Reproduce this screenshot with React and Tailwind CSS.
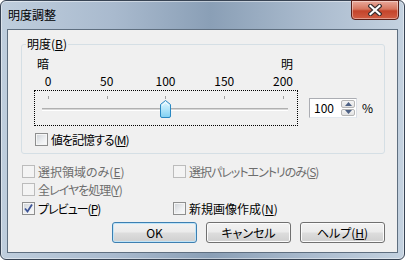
import React from "react";

function Check({ label, acc, disabled, checked, tight, className }) {
  return (
    <div className={`flex items-center gap-[3px] h-[13px] ${className || ""}`}>
      <span
        className={`w-[13px] h-[13px] shrink-0 border flex items-center justify-center ${
          disabled
            ? "border-[#bcbcbc] bg-[#f4f4f4]"
            : "border-[#8e8f8f] bg-[linear-gradient(135deg,#cdd1d6_0%,#eef0f2_60%,#fbfbfb_100%)] shadow-[inset_0_0_0_1px_#f5f5f5]"
        }`}
      >
        {checked && (
          <svg width="11" height="11" viewBox="0 0 11 11">
            <path d="M2 5.5 L4.5 8.5 L9 1.5" fill="none" stroke="#3d5496" strokeWidth="1.8" />
          </svg>
        )}
      </span>
      <span
        className={`leading-[14px] whitespace-nowrap ${tight ? "tracking-[-1px]" : ""} ${
          disabled ? "text-[#6d6d6d]" : "text-black"
        }`}
      >
        {label}(<span className="underline underline-offset-[1px]">{acc}</span>)
      </span>
    </div>
  );
}

function Button({ children, isDefault }) {
  return (
    <div
      className={`w-[85px] h-[21px] rounded-[3px] border flex items-center justify-center leading-[14px] bg-[linear-gradient(#f2f2f2_0%,#ebebeb_48%,#dddddd_52%,#cfcfcf_100%)] ${
        isDefault
          ? "border-[#3c7fb1] shadow-[inset_0_0_0_1px_#bfe4f8]"
          : "border-[#707070] shadow-[inset_0_0_0_1px_#fbfbfb]"
      }`}
    >
      {children}
    </div>
  );
}

export default function App() {
  return (
    <div className="w-[405px] h-[260px] bg-white font-['Noto_Sans_CJK_JP',sans-serif] [font-feature-settings:'palt'] text-[12px] text-black">
      <div className="relative w-full h-full flex flex-col rounded-[6px] border border-[#384454] bg-[linear-gradient(to_right,#bfcedd_0%,#a9bace_28%,#8a9fb6_52%,#a9bacd_76%,#c4d2e0_100%)] shadow-[inset_0_0_0_1px_rgba(255,255,255,0.45)]">
        <div className="h-[28px] shrink-0 flex items-center pl-[7px] pb-[1px] leading-[14px]">明度調整</div>
        <div className="absolute top-[-1px] left-[350px] w-[48px] h-[20px] rounded-b-[4px] border border-[#5a1f18] bg-[linear-gradient(#e9a99b_0%,#d6765f_45%,#c4442b_55%,#d15d43_100%)] shadow-[inset_0_0_0_1px_rgba(255,255,255,0.4)] flex items-center justify-center">
          <svg width="14" height="12" viewBox="0 0 14 12">
            <path d="M2.5 2 L11.5 10 M11.5 2 L2.5 10" stroke="#3b2f2f" strokeWidth="4.4" strokeLinecap="square" />
            <path d="M2.5 2 L11.5 10 M11.5 2 L2.5 10" stroke="#ffffff" strokeWidth="2.2" strokeLinecap="square" />
          </svg>
        </div>
        <div className="flex-1 mx-[6px] mb-[6px] border border-[#5f6f80] bg-[#f0f0f0] flex flex-col">
          <fieldset className="mt-[7px] ml-[13px] w-[364px] h-[117px] rounded-[3px] border border-[#d5dfe5]">
            <legend className="ml-[4px] px-[1px] leading-[14px]">
              明度(<span className="underline underline-offset-[1px]">B</span>)
            </legend>
            <div className="flex flex-col">
              <div className="mt-[6px] ml-[15px] w-[256px] flex justify-between leading-[14px]">
                <span>暗</span>
                <span>明</span>
              </div>
              <div className="mt-[3px] ml-[6px] flex gap-[18.75px] leading-[14px]">
                <span className="w-[40px] text-center">0</span>
                <span className="w-[40px] text-center">50</span>
                <span className="w-[40px] text-center">100</span>
                <span className="w-[40px] text-center">150</span>
                <span className="w-[40px] text-center">200</span>
              </div>
              <div className="mt-[2px] flex items-center">
                <div className="ml-[12px] w-[264px] h-[36px] border border-dotted border-black">
                  <svg width="262" height="34" viewBox="0 0 262 34" className="block">
                    <defs>
                      <linearGradient id="th" x1="0" y1="0" x2="0" y2="1">
                        <stop offset="0" stopColor="#e6f8fe" />
                        <stop offset="0.5" stopColor="#b4e6fa" />
                        <stop offset="1" stopColor="#7fd0f2" />
                      </linearGradient>
                    </defs>
                    {[13, 72, 130, 189, 248].map((x) => (
                      <rect key={x} x={x} y="5" width="1" height="3" fill="#a0a0a0" />
                    ))}
                    <rect x="7" y="17" width="246" height="1" fill="#b0b0b0" />
                    <rect x="7" y="18" width="246" height="1" fill="#d6d6d6" />
                    <rect x="7" y="19" width="246" height="1" fill="#ffffff" />
                    <path
                      d="M125.5 13.5 L130.5 9.5 L135.5 13.5 L135.5 25 Q135.5 26.5 134 26.5 L127 26.5 Q125.5 26.5 125.5 25 Z"
                      fill="url(#th)"
                      stroke="#2a88c2"
                      strokeWidth="1"
                    />
                    <path d="M127 14.5 L130.5 11.5 L134 14.5" fill="none" stroke="#ffffff" strokeOpacity="0.7" strokeWidth="1" />
                  </svg>
                </div>
                <div className="ml-[11px] w-[48px] h-[20px] border border-[#abadb3] border-b-[#e3e9ef] border-r-[#dbdfe6] bg-white flex">
                  <div className="flex-1 pl-[4px] flex items-center leading-[14px]">100</div>
                  <div className="w-[15px] flex flex-col gap-[1px] py-[1px] pr-[1px]">
                    <div className="flex-1 rounded-[2px] border border-[#b5b5b5] bg-[linear-gradient(#f4f4f4,#e2e2e2)] flex items-center justify-center">
                      <svg width="7" height="4" viewBox="0 0 7 4">
                        <path d="M0 4 L3.5 0 L7 4 Z" fill="#4d6185" />
                      </svg>
                    </div>
                    <div className="flex-1 rounded-[2px] border border-[#b5b5b5] bg-[linear-gradient(#f4f4f4,#e2e2e2)] flex items-center justify-center">
                      <svg width="7" height="4" viewBox="0 0 7 4">
                        <path d="M0 0 L7 0 L3.5 4 Z" fill="#4d6185" />
                      </svg>
                    </div>
                  </div>
                </div>
                <span className="ml-[5px] leading-[14px]">%</span>
              </div>
              <Check className="mt-[7px] ml-[13px]" label="値を記憶する" acc="M" tight />
            </div>
          </fieldset>
          <div className="mt-[11px] ml-[14px] grid grid-cols-[151px_1fr]">
            <Check label="選択領域のみ" acc="E" disabled />
            <Check label="選択パレットエントリのみ" acc="S" disabled tight />
            <Check className="mt-[5px]" label="全レイヤを処理" acc="Y" disabled tight />
            <div />
            <Check className="mt-[6px]" label="プレビュー" acc="P" checked tight />
            <Check className="mt-[6px]" label="新規画像作成" acc="N" />
          </div>
          <div className="mt-[7px] ml-[104px] flex gap-[9px]">
            <Button isDefault>OK</Button>
            <Button>キャンセル</Button>
            <Button>
              <span>
                ヘルプ(<span className="underline underline-offset-[1px]">H</span>)
              </span>
            </Button>
          </div>
        </div>
      </div>
    </div>
  );
}
